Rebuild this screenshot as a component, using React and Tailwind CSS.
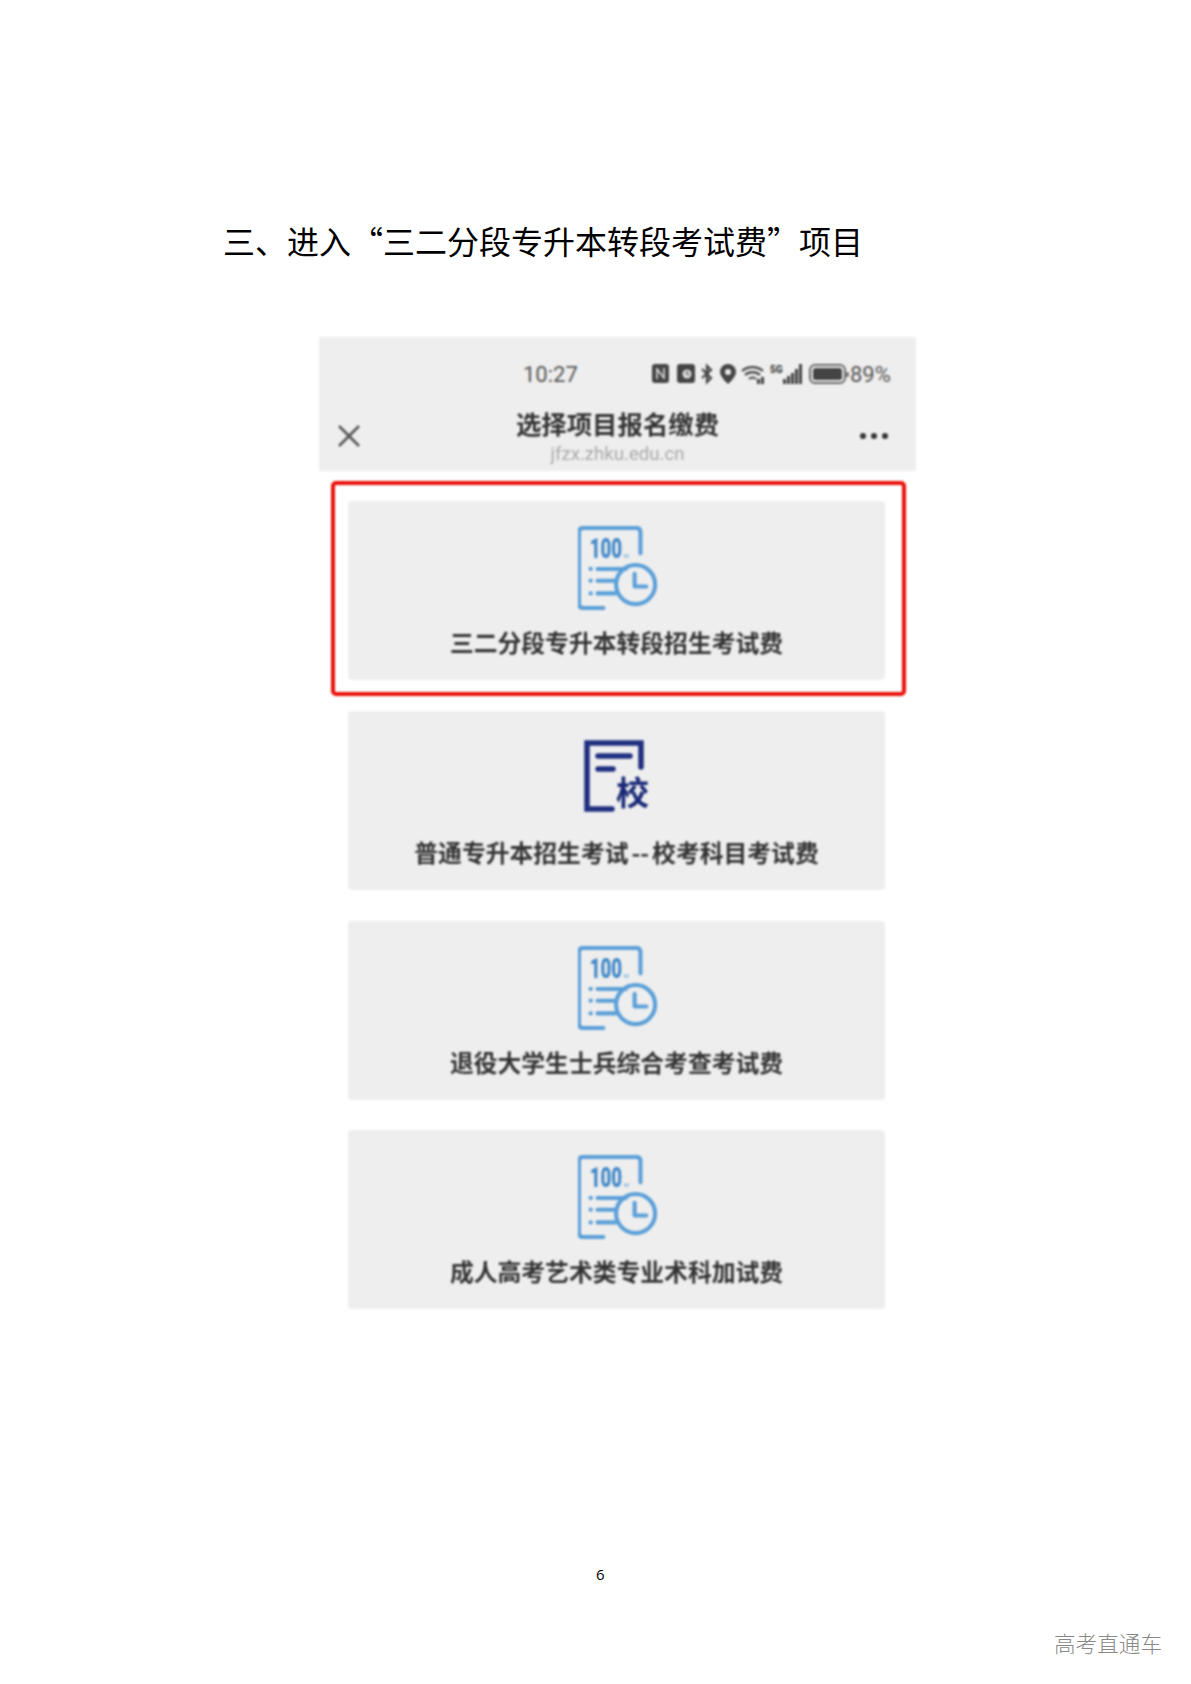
const cjk = 'font-["Noto_Sans_CJK_SC","Noto_Sans",sans-serif]';

function ScoreIcon() {
  return (
    <svg className="ml-[5px]" width="82" height="84" viewBox="0 0 84 86" fill="none" stroke="#5a9fd8" strokeWidth="4.2" strokeLinecap="round" strokeLinejoin="round">
      <path d="M64 28V6q0-4-4-4H5Q1 2 1 6v74q0 4 4 4h21" />
      <text transform="translate(12 33) scale(0.66 1)" fill="#4088c8" stroke="none" fontSize="29" fontWeight="900" fontFamily="Roboto, sans-serif">100</text>
      <text x="47" y="33" fill="#5a9fd8" stroke="none" fontSize="6" fontFamily="Roboto, sans-serif">M</text>
      <circle cx="13" cy="44" r="2.2" fill="#5a9fd8" stroke="none" />
      <circle cx="13" cy="56" r="2.2" fill="#5a9fd8" stroke="none" />
      <circle cx="13" cy="69" r="2.2" fill="#5a9fd8" stroke="none" />
      <path d="M20 44h29M20 56h18M20 69h18" />
      <circle cx="59" cy="60" r="20" />
      <path d="M58 49v13h12" />
    </svg>
  );
}

function SchoolIcon() {
  return (
    <svg className="ml-[2px]" width="68" height="76" viewBox="0 0 68 76" fill="none" stroke="#1f2f80" strokeWidth="5.5" strokeLinecap="round">
      <path d="M57 27V3H3v66h25" />
      <path d="M14 16h32M14 29h15" />
      <text x="32" y="65" fill="#1a2a78" stroke="none" fontSize="33" fontWeight="700" fontFamily="'Noto Sans CJK SC', sans-serif">校</text>
    </svg>
  );
}

function StatusIcons() {
  return (
    <svg width="198" height="24" viewBox="0 0 198 24" fill="#444">
      <rect x="0" y="2" width="17" height="19" rx="3" />
      <path d="M5 6v11M12 6v11M5 7l7 9" stroke="#ddd" strokeWidth="1.6" fill="none" />
      <rect x="25" y="2" width="18" height="19" rx="3" />
      <circle cx="35" cy="12" r="4.5" fill="#ddd" />
      <path d="M35 9v3l2 1" stroke="#444" strokeWidth="1.2" fill="none" />
      <path d="M50 7l9 9-4 4V4l4 4-9 8" stroke="#444" strokeWidth="2.2" fill="none" />
      <path d="M76 2a8 8 0 0 1 8 8c0 5-8 12-8 12s-8-7-8-12a8 8 0 0 1 8-8z" />
      <circle cx="76" cy="10" r="3" fill="#eee" />
      <path d="M90 9a16 16 0 0 1 21 0M93 13a11 11 0 0 1 15 0M97 17a5 5 0 0 1 7 0" stroke="#444" strokeWidth="2.2" fill="none" />
      <path d="M105 17h3v5h-3zM109 15h3v7h-3z" />
      <text x="118" y="11" fontSize="10" fontWeight="900" fontFamily="Roboto, sans-serif">5G</text>
      <rect x="131" y="17" width="3" height="5" />
      <rect x="135" y="14" width="3" height="8" />
      <rect x="139" y="11" width="3" height="11" />
      <rect x="143" y="7" width="3" height="15" />
      <rect x="147" y="2" width="3" height="20" />
      <rect x="158" y="3" width="35" height="18" rx="5" fill="none" stroke="#666" strokeWidth="2" />
      <rect x="161" y="6" width="29" height="12" rx="2.5" />
      <rect x="194.5" y="10" width="2" height="5" rx="1" />
    </svg>
  );
}

function Card({ icon, title }) {
  return (
    <div className="w-[537px] h-[179px] bg-[#eeeeee] rounded-[4px] flex flex-col items-center">
      <div className="h-[109px] flex items-end justify-center">{icon}</div>
      <p className="mt-[20px] text-[23.8px] leading-[24px] font-bold text-[#333] whitespace-nowrap">{title}</p>
    </div>
  );
}

export default function App() {
  return (
    <div className={`w-[1191px] h-[1684px] bg-white overflow-hidden flex flex-col ${cjk}`}>
      <h1 className="mt-[220px] ml-[223px] text-[32px] leading-[40px] font-normal text-black whitespace-nowrap">
        三、进入“三二分段专升本转段考试费”项目
      </h1>

      <section className="mt-[77px] ml-[319px] w-[597px] flex flex-col blur-[0.8px]">
        <header className="h-[134px] bg-[#eeeeee] flex flex-col">
          <div className="mt-[24px] h-[26px] flex items-center pl-[204px] text-[#555]">
            <span className="w-[129px] text-[22px] font-['Roboto',sans-serif]">10:27</span>
            <StatusIcons />
            <span className="text-[22px] font-['Roboto',sans-serif]">89%</span>
          </div>
          <div className="mt-[20px] grid grid-cols-[1fr_auto_1fr] items-start">
            <svg className="mt-[17px] ml-[18px]" width="24" height="24" viewBox="0 0 24 24" stroke="#555" strokeWidth="2.6" fill="none">
              <path d="M2 2l20 20M22 2L2 22" />
            </svg>
            <div className="flex flex-col items-center">
              <p className="text-[25.4px] leading-[32px] font-bold text-[#333] whitespace-nowrap">选择项目报名缴费</p>
              <p className="text-[18.6px] leading-[24px] mt-[3px] text-[#aaa] font-['Roboto',sans-serif]">jfzx.zhku.edu.cn</p>
            </div>
            <div className="mt-[26px] mr-[28px] flex justify-end gap-[5px]">
              <span className="size-[6px] rounded-full bg-[#333]" />
              <span className="size-[6px] rounded-full bg-[#333]" />
              <span className="size-[6px] rounded-full bg-[#333]" />
            </div>
          </div>
        </header>

        <div className="mt-[10px] ml-[12px] w-[575px] h-[215px] border-[4px] border-[#e81008] rounded-[5px] pl-[13px] pt-[16px]">
          <Card icon={<ScoreIcon />} title="三二分段专升本转段招生考试费" />
        </div>

        <div className="mt-[15px] ml-[29px] flex flex-col gap-[30.5px]">
          <Card icon={<div className="pb-[4px]"><SchoolIcon /></div>} title={<>普通专升本招生考试<span className="px-[3px]">--</span>校考科目考试费</>} />
          <Card icon={<ScoreIcon />} title="退役大学生士兵综合考查考试费" />
          <Card icon={<ScoreIcon />} title="成人高考艺术类专业术科加试费" />
        </div>
      </section>

      <p className="mt-[255px] ml-[596px] text-[15px] leading-[20px] text-black font-['Open_Sans',sans-serif]">6</p>
      <p className="mt-[44px] mr-[29px] text-right text-[21.6px] leading-[30px] font-light text-[#888]">高考直通车</p>
    </div>
  );
}
